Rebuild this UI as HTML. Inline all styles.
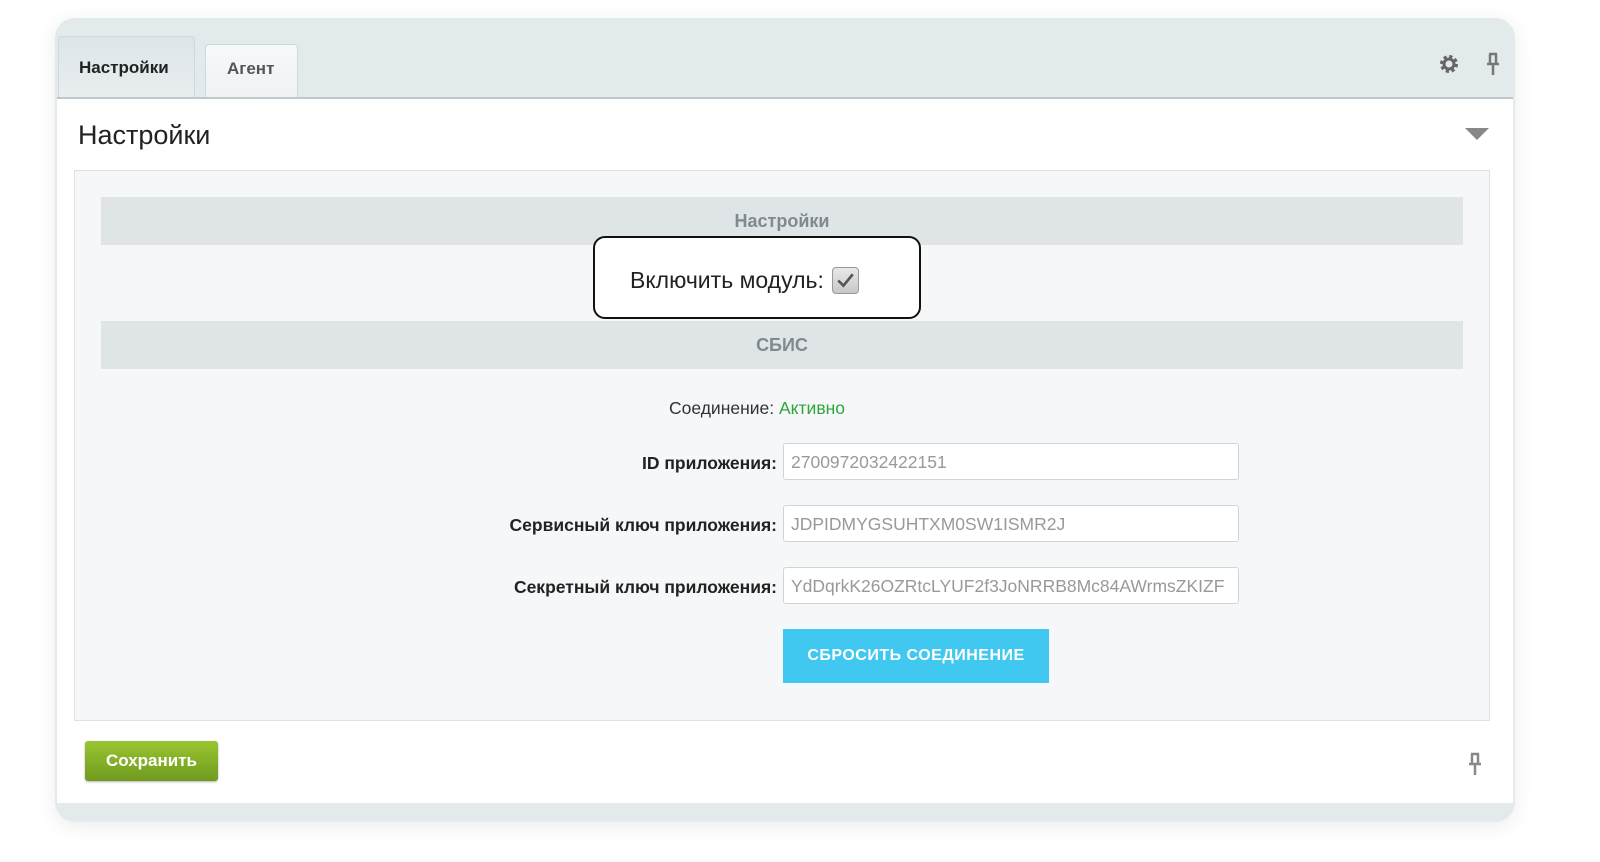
<!DOCTYPE html>
<html><head><meta charset="utf-8"><style>
*{box-sizing:border-box;margin:0;padding:0}
body{width:1600px;height:862px;background:#fff;font-family:"Liberation Sans",Arial,sans-serif;position:relative;overflow:hidden}
.outer{position:absolute;left:55px;top:18px;width:1460px;height:804px;border-radius:20px;background:#e3eaec;box-shadow:0 4px 20px rgba(0,0,0,.08)}
.tab{position:absolute;font-weight:bold;font-size:17px;border:1px solid #cfd8dc;border-bottom:none;border-radius:4px 4px 0 0}
.t1{left:58px;top:36px;width:137px;height:63px;background:linear-gradient(#dde5e8,#e9eef0);color:#222;padding:21px 0 0 20px}
.t2{left:205px;top:44px;width:93px;height:55px;background:linear-gradient(#f7f9fa,#eef2f3);color:#555;padding:14px 0 0 21px}
.line{position:absolute;left:57px;top:97px;width:1456px;height:2px;background:#bfc8cc}
.white{position:absolute;left:57px;top:99px;width:1456px;height:704px;background:#fff}
h1{position:absolute;left:78px;top:120px;font-weight:normal;font-size:27px;color:#222}
.content{position:absolute;left:74px;top:170px;width:1416px;height:551px;background:#f5f7f8;border:1px solid #dce3e6}
.bar{position:absolute;left:101px;width:1362px;height:48px;background:#dfe4e6;color:#808a8e;font-weight:bold;font-size:18px;text-align:center;line-height:48px}
.hl{position:absolute;left:593px;top:236px;width:328px;height:83px;border:2px solid #111;border-radius:12px;background:#fff;font-size:23px;color:#222;padding:29px 0 0 35px;white-space:nowrap}
.cb{display:inline-block;vertical-align:-5px;margin-left:8px;width:27px;height:27px;border:1px solid #999;border-radius:4px;background:linear-gradient(#e8e8e8,#c8c8c8)}
.lbl{position:absolute;right:823px;font-weight:bold;font-size:17.5px;color:#222}
.inp{position:absolute;left:783px;width:456px;height:37px;border:1px solid #cfd6d9;border-radius:3px;background:#fff;color:#999;font-size:17.5px;padding:8px 0 0 7px;white-space:nowrap;overflow:hidden}
.btn{position:absolute;left:783px;top:629px;width:266px;height:54px;background:#40c8f1;color:#fff;font-weight:bold;font-size:16px;text-align:center;line-height:54px;letter-spacing:.5px}
.save{position:absolute;left:85px;top:741px;width:133px;height:40px;border-radius:3px;background:linear-gradient(#9ac532,#6f9a1e);color:#fff;font-weight:bold;font-size:17px;text-align:center;line-height:40px;box-shadow:0 1px 2px rgba(0,0,0,.3)}
</style></head><body>
<div class="outer"></div>
<div class="tab t1">Настройки</div>
<div class="tab t2">Агент</div>
<div class="line"></div>
<div class="white"></div>
<svg style="position:absolute;left:1438px;top:53px" width="22" height="22" viewBox="0 0 22 22"><circle cx="11" cy="11" r="7" fill="none" stroke="#666" stroke-width="4" stroke-dasharray="3 2.5"/><circle cx="11" cy="11" r="5" fill="none" stroke="#666" stroke-width="3"/></svg>
<svg style="position:absolute;left:1484px;top:52px" width="18" height="24" viewBox="0 0 18 24"><path d="M5 2h8M6 2v9M12 2v9M3 12h12M9 12v11" stroke="#777" stroke-width="2.5" fill="none"/></svg>
<h1>Настройки</h1>
<svg style="position:absolute;left:1465px;top:128px" width="24" height="14"><path d="M0 0h24L12 12z" fill="#888"/></svg>
<div class="content"></div>
<div class="bar" style="top:197px">Настройки</div>
<div class="bar" style="top:321px">СБИС</div>
<div class="hl">Включить модуль:<span class="cb"><svg width="25" height="25" viewBox="0 0 24 24"><path d="M5 12l5 5 9-11" stroke="#555" stroke-width="2.5" fill="none"/></svg></span></div>
<div style="position:absolute;left:669px;top:398px;font-size:17.5px;color:#333">Соединение: <span style="color:#2ea53a">Активно</span></div>
<div class="lbl" style="top:453px">ID приложения:</div>
<div class="lbl" style="top:515px">Сервисный ключ приложения:</div>
<div class="lbl" style="top:577px">Секретный ключ приложения:</div>
<div class="inp" style="top:443px">2700972032422151</div>
<div class="inp" style="top:505px">JDPIDMYGSUHTXM0SW1ISMR2J</div>
<div class="inp" style="top:567px">YdDqrkK26OZRtcLYUF2f3JoNRRB8Mc84AWrmsZKIZF</div>
<div class="btn">СБРОСИТЬ СОЕДИНЕНИЕ</div>
<div class="save">Сохранить</div>
<svg style="position:absolute;left:1466px;top:752px" width="18" height="24" viewBox="0 0 18 24"><path d="M5 2h8M6 2v9M12 2v9M3 12h12M9 12v11" stroke="#888" stroke-width="2.5" fill="none"/></svg>
</body></html>
